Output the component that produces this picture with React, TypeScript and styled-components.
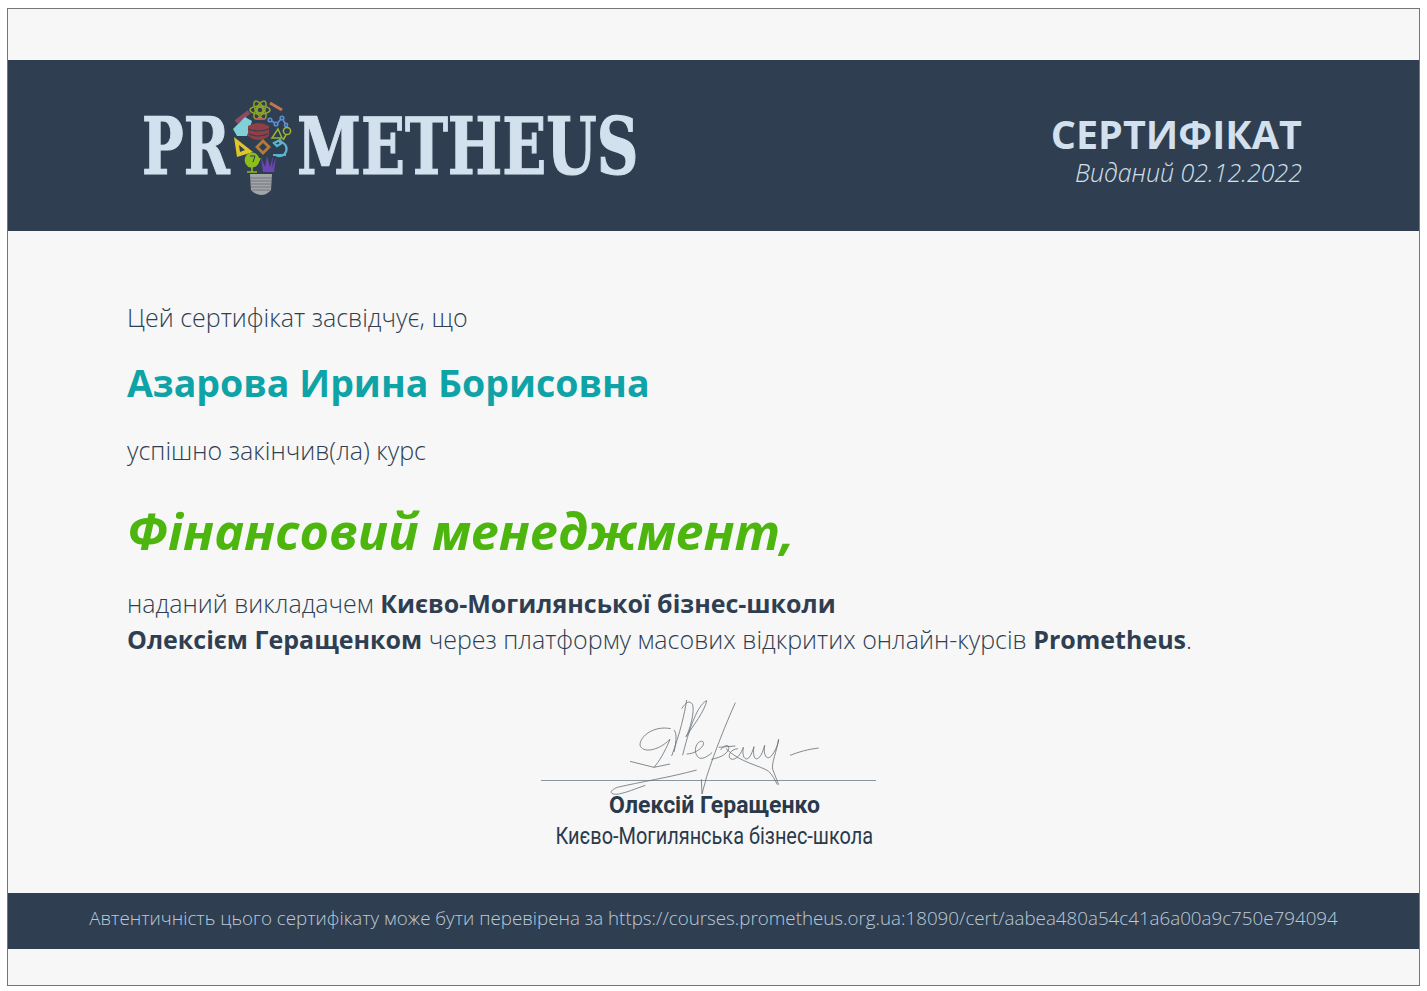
import React from "react";
import styled, { createGlobalStyle } from "styled-components";

const Global = createGlobalStyle`
  html, body { margin: 0; padding: 0; background: #fff; }
  body { font-family: "Open Sans", "Liberation Sans", sans-serif; }
`;

const Page = styled.div`
  width: 1427px;
  height: 991px;
  padding: 8px 7px 5px 7px;
  box-sizing: border-box;
`;
const Sheet = styled.div`
  height: 978px;
  box-sizing: border-box;
  border: 1px solid #757575;
  background: #f7f7f7;
  display: flex;
  flex-direction: column;
  padding-top: 51px;
`;
const Header = styled.header`
  height: 171px;
  background: #2f3f51;
  display: flex;
  align-items: center;
  justify-content: space-between;
  padding: 0 117px 0 134px;
  flex: none;
`;
const Logo = styled.div`
  display: flex;
  align-items: center;
  height: 110px;
`;
const LogoWord = styled.span<{ $w: number; $sx: number }>`
  font-family: "DejaVu Serif", serif;
  font-weight: 700;
  font-size: 78px;
  line-height: 1;
  color: #d3e0ed;
  -webkit-text-stroke: 1.2px #d3e0ed;
  display: inline-block;
  width: ${(p) => p.$w}px;
  white-space: nowrap;
  transform: translateY(1px) scaleX(${(p) => p.$sx});
  transform-origin: left center;
`;
const BulbSvg = styled.svg`
  flex: none;
  margin: 4px 3px 0 0;
`;
const Titles = styled.div`
  display: flex;
  flex-direction: column;
  align-items: flex-end;
  padding-top: 10px;
`;
const Title = styled.div`
  font-weight: 700;
  font-size: 39.5px;
  line-height: 38px;
  color: #d3e0ed;
`;
const Issued = styled.div`
  font-weight: 300;
  font-style: italic;
  font-size: 25px;
  line-height: 30px;
  margin-top: 4px;
  color: #d3e0ed;
`;
const Body = styled.main`
  flex: 1;
  padding: 69px 119px 0;
  color: #2f3f51;
`;
const Lead = styled.p`
  margin: 0;
  font-weight: 300;
  font-size: 25px;
  line-height: 34px;
`;
const Name = styled.h2`
  margin: 24px 0 0;
  font-weight: 700;
  font-size: 37.5px;
  line-height: 50px;
  color: #0ea3a6;
`;
const CourseLead = styled(Lead)`
  margin-top: 25px;
`;
const Course = styled.h1`
  margin: 31px 0 0;
  font-weight: 700;
  font-style: italic;
  font-size: 50.4px;
  line-height: 66px;
  color: #4cb50e;
`;
const Para = styled.p`
  margin: 21px 0 0;
  font-weight: 300;
  font-size: 25px;
  line-height: 36px;
  b { font-weight: 700; }
`;
const SignBlock = styled.div`
  width: 335px;
  margin: 38px 0 0 414px;
`;
const SignArea = styled.div`
  height: 85px;
  border-bottom: 1px solid #8d959c;
  position: relative;
`;
const SignSvg = styled.svg`
  position: absolute;
  left: -11px;
  top: -5px;
`;
const SignText = styled.div`
  padding-left: 12px;
  display: flex;
  flex-direction: column;
  align-items: center;
`;
const SignName = styled.div`
  font-family: Roboto, sans-serif;
  font-weight: 700;
  font-size: 23px;
  line-height: 30px;
  color: #2a3a4b;
  margin-top: 10px;
  white-space: nowrap;
`;
const SignOrg = styled.div`
  font-family: Roboto, sans-serif;
  font-weight: 400;
  font-size: 24px;
  line-height: 30px;
  white-space: nowrap;
  color: #2a3a4b;
  transform: scaleX(0.83);
`;
const Footer = styled.footer`
  height: 56px;
  box-sizing: border-box;
  padding-bottom: 7px;
  margin-bottom: 36px;
  background: #2f3f51;
  flex: none;
  display: flex;
  align-items: center;
  justify-content: center;
  font-weight: 300;
  font-size: 18.75px;
  color: #bccad8;
  white-space: nowrap;
`;

function Bulb() {
  return (
    <BulbSvg width="62" height="104" viewBox="0 0 62 104">
      <path d="M18 78 L40 78 L39 94 Q35 99 29 99 Q23 99 19 94 Z" fill="#a3a6a8" />
      <path d="M18 82H40M18 85H40M19 88H39M19 91H39M20 94H38" stroke="#70757a" strokeWidth="1" />
      <g fill="none" stroke="#8ea52a" strokeWidth="1.5">
        <circle cx="28" cy="14" r="3" />
        <ellipse cx="28" cy="14" rx="10" ry="4" />
        <ellipse cx="28" cy="14" rx="10" ry="4" transform="rotate(60 28 14)" />
        <ellipse cx="28" cy="14" rx="10" ry="4" transform="rotate(120 28 14)" />
      </g>
      <path d="M38 7 L50 14" stroke="#c9744e" strokeWidth="3" />
      <path d="M4 26 L17 16" stroke="#8c4a63" strokeWidth="4.5" />
      <path d="M1 33 L13 21 L20 25 L15 40 L5 40 Z" fill="#7fd0d8" />
      <path d="M16 30 Q26 24 37 30 L37 40 Q26 48 16 40 Z" fill="#8e4046" />
      <path d="M16 33Q26 37 37 33M17 38Q26 42 36 38" fill="none" stroke="#2f3f51" strokeWidth="1.2" />
      <path d="M24 23H33" stroke="#b5634a" strokeWidth="2" />
      <g fill="none" stroke="#5b8fd0" strokeWidth="1.6">
        <circle cx="38" cy="24" r="1.8" /><circle cx="44" cy="28" r="1.8" /><circle cx="50" cy="22" r="1.8" /><circle cx="54" cy="29" r="1.6" />
        <path d="M39.5 25L43 27M45.5 27L49 23M51 24L53.5 28" />
      </g>
      <path d="M40 42 L46 33 L50 42 Z" fill="none" stroke="#9ab52a" strokeWidth="1.5" />
      <circle cx="55" cy="35" r="3.6" fill="none" stroke="#a5b82a" strokeWidth="1.5" />
      <path d="M54 39L51 44" stroke="#a5b82a" strokeWidth="1.5" />
      <path d="M2 41 L21 56 L5 61 Z M7 49 L13 54 L8 56 Z" fill="#e0c52a" fillRule="evenodd" />
      <path d="M31 43 L39 51 L31 59 L23 51 Z" fill="#b37a3a" />
      <path d="M31 47 L35 51 L31 55 L27 51 Z" fill="#2f3f51" />
      <path d="M47 46 a7 7 0 1 1 -3 13 M42 47 l6 -3 l2 3 l-5 3 Z M41 59 H54" fill="none" stroke="#5ab4d0" strokeWidth="2.2" />
      <circle cx="20" cy="64" r="7.4" fill="#8cbc1e" />
      <path d="M18 60 L23 60 L21 66" fill="none" stroke="#2f3f51" strokeWidth="1" />
      <path d="M16 70 Q24 73 28 62 M20 71 V76 M15 76 H25" fill="none" stroke="#8cbc1e" strokeWidth="1.6" />
      <path d="M29 61 L33 71 L35 60 L38 71 L41 60 L40 72 L44 61 L42 76 L31 76 Z" fill="#6d45b5" />
    </BulbSvg>
  );
}

function Signature() {
  return (
    <SignSvg width="360" height="170" viewBox="0 0 1080 510" fill="none" stroke="#666e75" strokeWidth="2.4">
      <path d="M422 116 C372 106 330 138 330 165 C336 190 384 184 420 148 C404 186 388 214 372 232 L300 214 M372 232 L420 222" />
      <path d="M500 240 C420 262 330 276 262 292 C236 302 238 316 266 312 C290 308 316 296 346 286" />
      <path d="M432 120 C442 130 438 160 432 186" />
      <path d="M470 30 C464 70 450 130 425 198" />
      <path d="M455 56 C468 38 478 28 488 44 C494 66 480 120 468 140 C488 110 526 60 530 32 C510 40 484 88 458 196" />
      <path d="M470 192 C500 192 530 164 518 154 C498 150 486 190 508 204 C520 208 534 198 546 188" />
      <path d="M616 38 C590 96 552 190 530 260 L516 312 L514 268" />
      <path d="M566 172 L616 168 M544 208 C566 204 592 194 596 176 C600 160 580 166 572 180" />
      <path d="M624 176 C596 178 590 208 608 208 C624 206 634 188 640 172 C636 194 642 214 656 204 C664 196 668 182 672 170 C668 192 672 214 686 204 C696 196 700 178 704 166 C700 188 706 212 722 200 C734 188 744 166 746 148 C740 184 724 220 728 238 L746 284" />
      <path d="M588 176 C630 218 690 226 716 244 C726 254 736 270 742 284" />
      <path d="M780 196 C806 186 832 178 866 174" />
    </SignSvg>
  );
}

export default function App() {
  return (
    <Page>
      <Global />
      <Sheet>
        <Header>
          <Logo>
            <LogoWord $w={90} $sx={0.71}>PR</LogoWord>
            <Bulb />
            <LogoWord $w={341} $sx={0.74}>METHEUS</LogoWord>
          </Logo>
          <Titles>
            <Title>СЕРТИФІКАТ</Title>
            <Issued>Виданий 02.12.2022</Issued>
          </Titles>
        </Header>
        <Body>
          <Lead>Цей сертифікат засвідчує, що</Lead>
          <Name>Азарова Ирина Борисовна</Name>
          <CourseLead>успішно закінчив(ла) курс</CourseLead>
          <Course>Фінансовий менеджмент,</Course>
          <Para>
            наданий викладачем <b>Києво-Могилянської бізнес-школи</b>
            <br />
            <b>Олексієм Геращенком</b> через платформу масових відкритих онлайн-курсів <b>Prometheus</b>.
          </Para>
          <SignBlock>
            <SignArea>
              <Signature />
            </SignArea>
            <SignText>
              <SignName>Олексій Геращенко</SignName>
              <SignOrg>Києво-Могилянська бізнес-школа</SignOrg>
            </SignText>
          </SignBlock>
        </Body>
        <Footer>
          Автентичність цього сертифікату може бути перевірена за https://courses.prometheus.org.ua:18090/cert/aabea480a54c41a6a00a9c750e794094
        </Footer>
      </Sheet>
    </Page>
  );
}
